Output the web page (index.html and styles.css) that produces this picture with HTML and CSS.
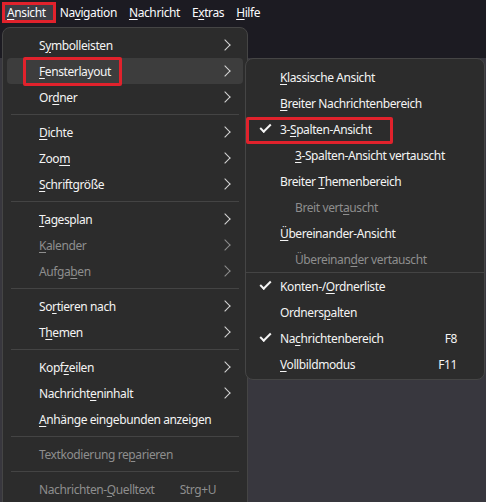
FILE: index.html
```html
<!DOCTYPE html>
<html lang="de">
<head>
    <meta charset="UTF-8">
    <meta name="viewport" content="width=device-width, initial-scale=1.0">
    <title>Ansicht</title>
    <link rel="stylesheet" href="styles.css">
</head>
<body>
    <!-- Menubar -->
    <div class="menubar">
        <span class="menubar-item active marked"><u>A</u>nsicht</span>
        <span class="menubar-item">Na<u>v</u>igation</span>
        <span class="menubar-item"><u>N</u>achricht</span>
        <span class="menubar-item">E<u>x</u>tras</span>
        <span class="menubar-item"><u>H</u>ilfe</span>
    </div>

    <div class="app">
        <div class="toolbar"></div>
        <div class="content"></div>

        <!-- Ansicht menu -->
        <div class="menu main-menu">
            <div class="item"><span class="label">S<u>y</u>mbolleisten</span><span class="arrow"></span></div>
            <div class="item hover"><span class="label marked fenster"><u>F</u>ensterlayout</span><span class="arrow"></span></div>
            <div class="item"><span class="label">Or<u>d</u>ner</span><span class="arrow"></span></div>
            <div class="separator"></div>
            <div class="item"><span class="label"><u>D</u>ichte</span><span class="arrow"></span></div>
            <div class="item"><span class="label">Zoo<u>m</u></span><span class="arrow"></span></div>
            <div class="item"><span class="label"><u>S</u>chriftgröße</span><span class="arrow"></span></div>
            <div class="separator"></div>
            <div class="item"><span class="label"><u>T</u>agesplan</span><span class="arrow"></span></div>
            <div class="item disabled"><span class="label"><u>K</u>alender</span><span class="arrow"></span></div>
            <div class="item disabled"><span class="label">Aufga<u>b</u>en</span><span class="arrow"></span></div>
            <div class="separator"></div>
            <div class="item"><span class="label">So<u>r</u>tieren nach</span><span class="arrow"></span></div>
            <div class="item"><span class="label">T<u>h</u>emen</span><span class="arrow"></span></div>
            <div class="separator"></div>
            <div class="item"><span class="label">Kopf<u>z</u>eilen</span><span class="arrow"></span></div>
            <div class="item"><span class="label">Nachricht<u>e</u>ninhalt</span><span class="arrow"></span></div>
            <div class="item"><span class="label"><u>A</u>nhänge eingebunden anzeigen</span></div>
            <div class="separator"></div>
            <div class="item disabled"><span class="label">Textkodierung re<u>p</u>arieren</span></div>
            <div class="separator"></div>
            <div class="item disabled"><span class="label">Nachrichten-<u>Q</u>uelltext</span><span class="accel">Strg+U</span></div>
        </div>

        <!-- Fensterlayout submenu -->
        <div class="menu sub-menu">
            <div class="item"><span class="label"><u>K</u>lassische Ansicht</span></div>
            <div class="item"><span class="label"><u>B</u>reiter Nachrichtenbereich</span></div>
            <div class="item checked"><span class="label marked spalten">3-<u>S</u>palten-Ansicht</span></div>
            <div class="item indent"><span class="label"><u>3</u>-Spalten-Ansicht vertauscht</span></div>
            <div class="item"><span class="label">Breiter <u>T</u>hemenbereich</span></div>
            <div class="item indent disabled"><span class="label">Breit vert<u>a</u>uscht</span></div>
            <div class="item"><span class="label"><u>Ü</u>bereinander-Ansicht</span></div>
            <div class="item indent disabled"><span class="label">Übereinan<u>d</u>er vertauscht</span></div>
            <div class="separator"></div>
            <div class="item checked"><span class="label">Konten-/<u>O</u>rdnerliste</span></div>
            <div class="item"><span class="label">Ordners<u>p</u>alten</span></div>
            <div class="item checked"><span class="label">Na<u>c</u>hrichtenbereich</span><span class="accel">F8</span></div>
            <div class="item"><span class="label"><u>V</u>ollbildmodus</span><span class="accel">F11</span></div>
        </div>
    </div>
</body>
</html>
```

FILE: styles.css
```css
/* Global Styles */
body {
    margin: 0;
    padding: 0;
    width: 486px;
    height: 502px;
    overflow: hidden;
    background-color: #38373e;
    font-family: "Noto Sans", "Open Sans", sans-serif;
    font-size: 12px;
    letter-spacing: -0.4px;
    color: #f4f4f4;
}

u {
    text-decoration-thickness: 1px;
    text-underline-offset: 2px;
}

/* Menubar */
.menubar {
    display: flex;
    height: 24px;
    padding: 0 0 0 1px;
    background-color: #1c1b22;
    align-items: flex-start;
}

.menubar-item {
    margin-top: 2px;
    padding: 0 6px;
    height: 21px;
    line-height: 21px;
    color: #fbfbfe;
}

.menubar-item.active {
    background-color: #3e3d44;
}

.menubar-item.marked {
    margin-left: 1px;
    margin-right: -2px;
    padding: 0 7px 0 2px;
    height: 15px;
    line-height: 15px;
    border: 3px solid #e1222c;
}

/* App behind the menus */
.app {
    position: relative;
    height: 478px;
}

.toolbar {
    height: 34px;
    background-color: #1c1b22;
}

.content {
    height: 444px;
    background-color: #38373e;
}

/* Menus */
.menu {
    position: absolute;
    box-sizing: border-box;
    background-color: #2c2c2c;
    border: 1px solid #454545;
    border-radius: 8px;
}

.main-menu {
    left: 2px;
    top: 3px;
    width: 246px;
    height: 500px;
    padding: 4px 0;
}

.sub-menu {
    left: 245px;
    top: 34px;
    width: 240px;
    padding: 5px 0 2px;
    z-index: 2;
}

.item {
    position: relative;
    display: flex;
    align-items: center;
    height: 26px;
    margin: 0 4px;
    padding: 0 12px 0 32px;
    border-radius: 4px;
    white-space: nowrap;
}

.item.hover {
    background-color: #3d3d3d;
}

.item .label {
    flex: 1;
    position: relative;
    line-height: 16px;
    padding-top: 1px;
}

.item.disabled {
    color: #8e8e8e;
}

.item .accel {
    padding-right: 15px;
}

.item.disabled .accel {
    color: #8e8e8e;
}

/* Submenu chevron */
.arrow {
    display: block;
    width: 7px;
    height: 7px;
    border: solid #d6d6d6;
    border-width: 1.3px 1.3px 0 0;
    transform: rotate(45deg);
    margin-right: 2px;
}

.item.disabled .arrow {
    border-color: #8e8e8e;
}

.separator {
    height: 1px;
    margin: 4px 8px;
    background-color: #444444;
}

.sub-menu .item {
    padding-left: 31px;
    margin: 0 3px;
}

.sub-menu .item .accel {
    padding-right: 12px;
}

.sub-menu .item.indent {
    padding-left: 46px;
}

.sub-menu .separator {
    margin: 0;
}

/* Check mark for toggled entries */
.item.checked::before {
    content: "";
    position: absolute;
    left: 11px;
    top: 8px;
    width: 9px;
    height: 4px;
    border: solid #f4f4f4;
    border-width: 0 0 2px 2px;
    transform: rotate(-45deg);
}

/* Red highlight frames */
.label.marked::after {
    content: "";
    position: absolute;
    border: 3px solid #e1222c;
    border-radius: 2px;
    pointer-events: none;
}

.label.fenster {
    flex: none;
    margin-right: auto;
}

.label.fenster::after {
    left: -16px;
    right: -11px;
    top: -6px;
    bottom: -6px;
}

.label.spalten {
    flex: none;
    margin-right: auto;
}

.label.spalten::after {
    left: -34px;
    right: -21px;
    top: -4px;
    bottom: -6px;
}
```
